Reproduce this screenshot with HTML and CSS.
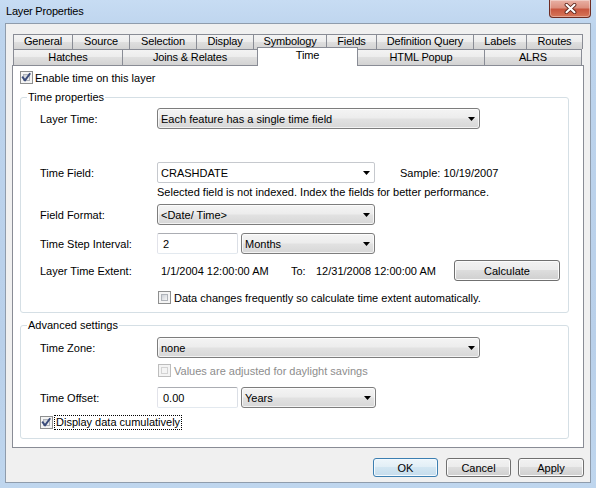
FILE: index.html
```html
<!DOCTYPE html>
<html>
<head>
<meta charset="utf-8">
<title>Layer Properties</title>
<link rel="stylesheet" href="styles.css">
</head>
<body>
<div class="window">
  <div class="titlebar">
    <span class="title">Layer Properties</span>
    <div class="close">
      <svg width="13" height="11" viewBox="0 0 13 11"><path d="M2.5 1.8 L10.5 9.2 M10.5 1.8 L2.5 9.2" stroke="#5a231b" stroke-width="3.8" stroke-linecap="round"/><path d="M2.5 1.8 L10.5 9.2 M10.5 1.8 L2.5 9.2" stroke="#ffffff" stroke-width="2.1" stroke-linecap="round"/></svg>
    </div>
  </div>
  <div class="client">
    <div class="tabs">
      <div class="tabrow row1">
        <div class="tab t-general">General</div>
        <div class="tab t-source">Source</div>
        <div class="tab t-selection">Selection</div>
        <div class="tab t-display">Display</div>
        <div class="tab t-symbology">Symbology</div>
        <div class="tab t-fields">Fields</div>
        <div class="tab t-defq">Definition Query</div>
        <div class="tab t-labels">Labels</div>
        <div class="tab t-routes">Routes</div>
      </div>
      <div class="tabrow row2">
        <div class="tab t-hatches">Hatches</div>
        <div class="tab t-joins">Joins &amp; Relates</div>
        <div class="tab t-time sel">Time</div>
        <div class="tab t-html">HTML Popup</div>
        <div class="tab t-alrs">ALRS</div>
      </div>
    </div>
    <div class="panel">
      <div class="check-row enable">
        <span class="cb checked"><svg width="11" height="11" viewBox="0 0 11 11"><path d="M1.2 4.6 L4 8.4 L9.2 1.2" stroke="#3a4b7a" stroke-width="1.9" fill="none" stroke-linejoin="round"/></svg></span>
        <span>Enable time on this layer</span>
      </div>

      <fieldset class="group g1">
        <legend>Time properties</legend>
        <div class="gbody">
          <div class="row r-a">
            <span class="lbl">Layer Time:</span>
            <div class="combo w-long"><span>Each feature has a single time field</span><svg class="arrow" width="7" height="4" viewBox="0 0 7 4"><path d="M0 0H7L3.5 4Z"/></svg></div>
          </div>
          <div class="row r-b">
            <span class="lbl">Time Field:</span>
            <div class="combo edit w-mid"><span>CRASHDATE</span><svg class="arrow" width="7" height="4" viewBox="0 0 7 4"><path d="M0 0H7L3.5 4Z"/></svg></div>
            <span class="sample">Sample: 10/19/2007</span>
          </div>
          <div class="hint">Selected field is not indexed. Index the fields for better performance.</div>
          <div class="row r-d">
            <span class="lbl">Field Format:</span>
            <div class="combo w-mid"><span>&lt;Date/ Time&gt;</span><svg class="arrow" width="7" height="4" viewBox="0 0 7 4"><path d="M0 0H7L3.5 4Z"/></svg></div>
          </div>
          <div class="row r-e">
            <span class="lbl">Time Step Interval:</span>
            <div class="tb">2</div>
            <div class="combo w-unit"><span>Months</span><svg class="arrow" width="7" height="4" viewBox="0 0 7 4"><path d="M0 0H7L3.5 4Z"/></svg></div>
          </div>
          <div class="row r-f">
            <span class="lbl">Layer Time Extent:</span>
            <span class="ext-from">1/1/2004 12:00:00 AM</span>
            <span class="ext-to">To:</span>
            <span class="ext-end">12/31/2008 12:00:00 AM</span>
            <button class="btn calc">Calculate</button>
          </div>
          <div class="check-row r-g">
            <span class="cb"></span>
            <span>Data changes frequently so calculate time extent automatically.</span>
          </div>
        </div>
      </fieldset>

      <fieldset class="group g2">
        <legend>Advanced settings</legend>
        <div class="gbody">
          <div class="row r-tz">
            <span class="lbl">Time Zone:</span>
            <div class="combo w-long"><span>none</span><svg class="arrow" width="7" height="4" viewBox="0 0 7 4"><path d="M0 0H7L3.5 4Z"/></svg></div>
          </div>
          <div class="check-row r-dst disabled">
            <span class="cb"></span>
            <span>Values are adjusted for daylight savings</span>
          </div>
          <div class="row r-to">
            <span class="lbl">Time Offset:</span>
            <div class="tb">0.00</div>
            <div class="combo w-unit2"><span>Years</span><svg class="arrow" width="7" height="4" viewBox="0 0 7 4"><path d="M0 0H7L3.5 4Z"/></svg></div>
          </div>
          <div class="check-row r-cum">
            <span class="cb checked"><svg width="11" height="11" viewBox="0 0 11 11"><path d="M1.2 4.6 L4 8.4 L9.2 1.2" stroke="#3a4b7a" stroke-width="1.9" fill="none" stroke-linejoin="round"/></svg></span>
            <span class="focus">Display data cumulatively</span>
          </div>
        </div>
      </fieldset>
    </div>
    <div class="buttons">
      <button class="btn default b-ok">OK</button>
      <button class="btn b-cancel">Cancel</button>
      <button class="btn b-apply">Apply</button>
    </div>
  </div>
</div>
</body>
</html>
```

FILE: styles.css
```css
* { box-sizing: border-box; }
html, body { margin: 0; padding: 0; }
body {
  width: 596px;
  height: 488px;
  overflow: hidden;
  font-family: "Liberation Sans", Arial, sans-serif;
  font-size: 11px;
  color: #000;
}

.window {
  width: 596px;
  height: 488px;
  display: flex;
  flex-direction: column;
  padding: 0 5px 5px;
  background: linear-gradient(#c7dcf3 0, #bdd4ed 30px, #b9d0ea 70%, #bfd6ee 100%);
}

.titlebar {
  height: 23px;
  flex: none;
  display: flex;
  align-items: flex-start;
}
.title {
  padding: 5px 0 0 1px;
  line-height: 13px;
  letter-spacing: -0.2px;
}
.close {
  margin-left: auto;
  width: 42px;
  height: 18px;
  border: 1px solid #6e2c22;
  border-top: none;
  border-radius: 0 0 4px 4px;
  background: linear-gradient(#e9b1a5 0%, #dc8f7e 45%, #c8563f 55%, #d77659 100%);
  box-shadow: inset 0 0 0 1px rgba(255, 255, 255, 0.35);
  display: flex;
  align-items: center;
  justify-content: center;
}

.client {
  flex: 1;
  display: flex;
  flex-direction: column;
  padding: 10px 6px 0;
  background: #f0f0f0;
  border: 1px solid #8f9cac;
}

/* tabs */
.tabs { margin-left: 1px; width: 570px; }
.tabrow { display: flex; width: 570px; }
.row1 { height: 15px; }
.row2 { height: 16px; align-items: flex-start; }
.tab {
  height: 100%;
  border: 1px solid #898c95;
  border-right: none;
  border-bottom: none;
  background: linear-gradient(#f3f3f3, #ececec 50%, #dfdfdf 50%, #d3d3d3);
  text-align: center;
  white-space: nowrap;
  letter-spacing: -0.15px;
}
.row1 .tab { line-height: 13px; }
.row2 .tab { line-height: 14px; }
.tab:last-child { border-right: 1px solid #898c95; }
.tab.sel {
  position: relative;
  z-index: 1;
  height: 19px;
  margin-top: -2px;
  margin-right: -1px;
  border-right: 1px solid #898c95;
  background: #fff;
  line-height: 14px;
}
.t-general { width: 59px; }
.t-source { width: 57px; }
.t-selection { width: 67px; }
.t-display { width: 57px; }
.t-symbology { width: 73px; }
.t-fields { width: 50px; }
.t-defq { width: 97px; }
.t-labels { width: 53px; }
.t-routes { width: 57px; }
.t-hatches { width: 109px; }
.t-joins { width: 135px; }
.t-time { width: 101px; }
.t-html { width: 127px; }
.t-alrs { width: 98px; }

/* panel */
.panel {
  height: 383px;
  flex: none;
  border: 1px solid #898c95;
  background: #fff;
  padding: 0 0 0 7px;
  display: flex;
  flex-direction: column;
}

.check-row {
  display: flex;
  align-items: center;
  gap: 3px;
  height: 13px;
  white-space: nowrap;
}
.enable { margin-top: 5px; gap: 2px; }

.cb {
  flex: none;
  width: 13px;
  height: 13px;
  border: 1px solid #8e8f8f;
  padding: 2px;
  background: #f4f4f4;
  display: grid;
}
.cb::before {
  content: "";
  grid-area: 1 / 1;
  border: 1px solid #b0b4ba;
  background: linear-gradient(135deg, #cdd1d7, #f7f7f7);
}
.cb svg {
  grid-area: 1 / 1;
  margin: -2px;
  position: relative;
}
.disabled { color: #8d8d8d; }
.disabled .cb { border-color: #bdbdbd; }
.disabled .cb::before { border-color: #d3d3d3; background: #f4f4f4; }

.group {
  width: 549px;
  min-width: 0;
  margin: 7px 0 0;
  padding: 4px 0 8px 6px;
  border: 1px solid #d5dfe5;
  border-radius: 3px;
}
.group legend {
  padding: 0 1px;
  line-height: 13px;
}
.g2 { margin-top: 6px; padding-top: 5px; padding-bottom: 9px; }

.gbody {
  padding-left: 13px;
  display: flex;
  flex-direction: column;
}

.row {
  display: flex;
  align-items: center;
  height: 21px;
  white-space: nowrap;
}
.lbl { width: 117px; flex: none; }

.r-b { margin-top: 33px; }
.hint { margin-top: 2px; height: 14px; line-height: 14px; padding-left: 117px; white-space: nowrap; }
.r-d { margin-top: 5px; }
.r-e { margin-top: 8px; }
.r-f { margin-top: 6px; }
.r-g { margin-top: 10px; padding-left: 118px; }

.r-dst { margin-top: 6px; padding-left: 118px; }
.r-to { margin-top: 10px; }
.r-cum { margin-top: 8px; }

.combo {
  flex: none;
  height: 21px;
  border: 1px solid #7d7d7d;
  border-radius: 3px;
  background: linear-gradient(#f4f4f4, #ededed 45%, #e1e1e1 55%, #d7d7d7);
  box-shadow: inset 0 0 0 1px rgba(255, 255, 255, 0.7);
  display: flex;
  align-items: center;
  justify-content: space-between;
  padding: 0 4px 0 3px;
}
.combo.edit {
  background: #fff;
  border-color: #c6c9ce;
  border-radius: 2px;
  box-shadow: none;
}
.arrow { fill: #000; flex: none; }
.w-long { width: 323px; }
.w-mid { width: 218px; }
.w-unit { width: 134px; margin-left: 3px; }
.w-unit2 { width: 135px; margin-left: 3px; }

.sample { margin-left: 25px; }

.tb {
  flex: none;
  width: 81px;
  height: 21px;
  border: 1px solid;
  border-color: #abadb3 #dbdfe6 #e3e9ef #e2e3ea;
  border-radius: 2px;
  background: #fff;
  padding-left: 5px;
  display: flex;
  align-items: center;
}

.ext-from { width: 134px; padding-left: 4px; flex: none; }
.ext-to { width: 25px; flex: none; }
.ext-end { width: 138px; flex: none; }

.btn {
  font: inherit;
  color: #000;
  margin: 0;
  padding: 0;
  height: 19px;
  border: 1px solid #707070;
  border-radius: 3px;
  background: linear-gradient(#f2f2f2, #ebebeb 50%, #dddddd 50%, #cfcfcf);
  box-shadow: inset 0 0 0 1px #fbfbfb;
  text-align: center;
}
.calc { width: 106px; height: 21px; }
.btn.default {
  border-color: #3c7fb1;
  background: linear-gradient(#eef6fb, #e1eef6 50%, #d2e6f2 50%, #c5dcec);
  box-shadow: inset 0 0 0 1px #f4fafe;
}

.focus {
  outline: 1px dotted #000;
  outline-offset: 0;
  padding: 0 1px;
  margin-left: -1px;
  line-height: 13px;
}

.buttons {
  display: flex;
  justify-content: flex-end;
  margin-top: 10px;
}
.b-ok { width: 65px; }
.b-cancel { width: 65px; margin-left: 8px; }
.b-apply { width: 66px; margin-left: 7px; }
```
